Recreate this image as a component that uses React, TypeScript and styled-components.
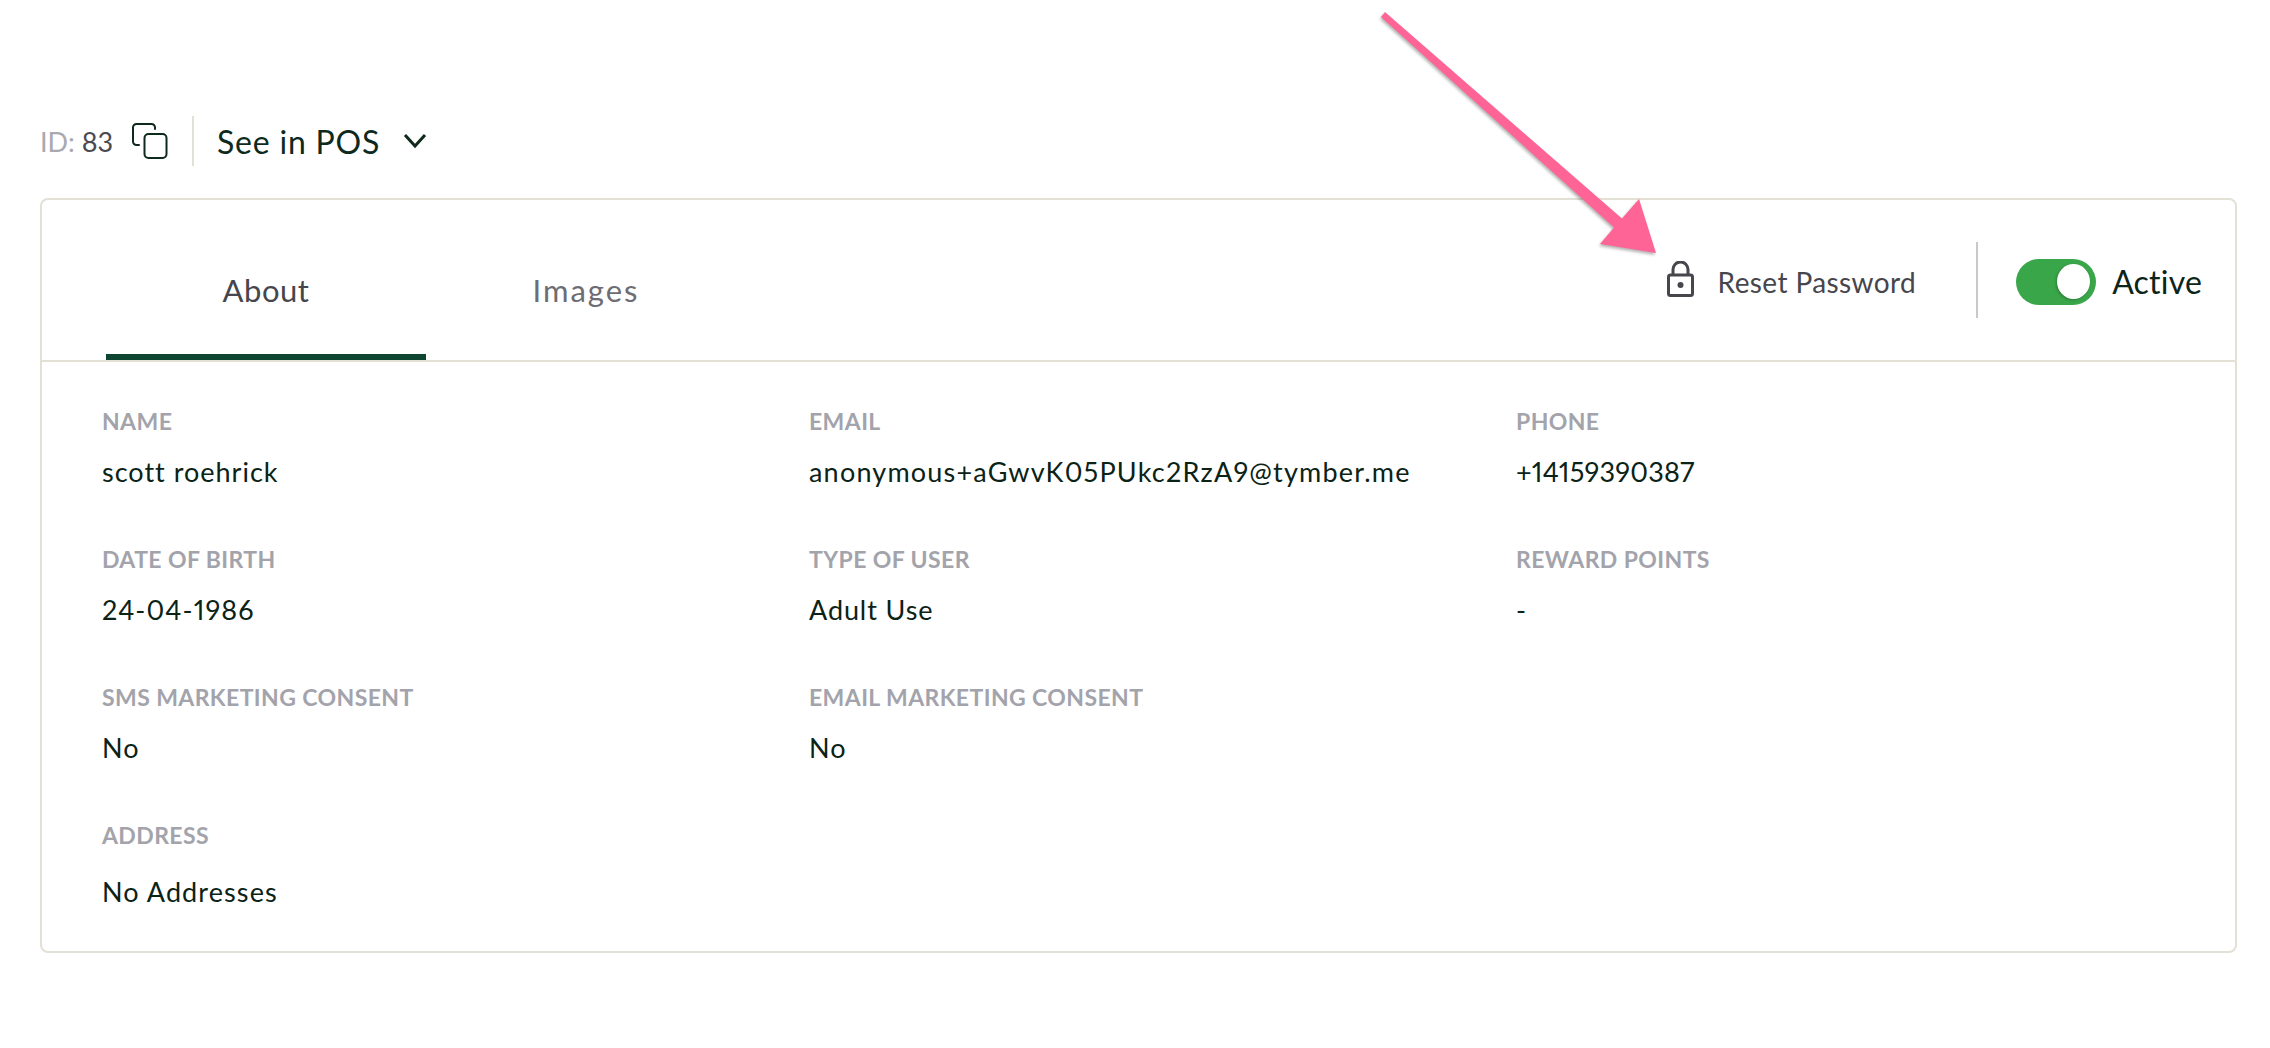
import React from "react";
import styled, { createGlobalStyle } from "styled-components";

const Global = createGlobalStyle`
  html, body { margin: 0; padding: 0; background: #fff; }
  body { font-family: "Lato", "Noto Sans", sans-serif; color: #0d2418; font-variant-numeric: proportional-nums; }
`;

const Page = styled.div`
  position: relative;
  width: 2270px;
  height: 1048px;
  box-sizing: border-box;
  padding: 116px 33px 0 40px;
  overflow: hidden;
`;

const TopBar = styled.div`
  display: flex;
  align-items: center;
  height: 50px;
  margin-bottom: 32px;
`;

const IdText = styled.span`
  font-size: 27px;
  color: #4a4a50;
  width: 92px;
  white-space: nowrap;
  span { color: #a9a9b0; }
`;

const IconSlot = styled.span<{ $w: number; $lift?: number }>`
  display: flex;
  width: ${(p) => p.$w}px;
  margin-bottom: ${(p) => p.$lift ?? 0}px;
  flex: none;
`;

const VRule = styled.span<{ $h: number; $c: string; $lift?: number }>`
  flex: none;
  width: 2px;
  background: ${(p) => p.$c};
  height: ${(p) => p.$h}px;
  margin-bottom: ${(p) => p.$lift ?? 0}px;
`;

const PosButton = styled.span`
  font-size: 32px;
  letter-spacing: 0.8px;
  color: #0d2a1c;
  margin: 0 23px 0 23px;
  white-space: nowrap;
`;

const Card = styled.section`
  box-sizing: border-box;
  height: 755px;
  border: 2px solid #e3e0d6;
  border-radius: 8px;
`;

const CardHead = styled.header`
  display: flex;
  justify-content: space-between;
  height: 162px;
  box-sizing: border-box;
  border-bottom: 2px solid #e3e0d6;
  padding: 0 33px 0 64px;
`;

const Tabs = styled.nav`
  display: flex;
  height: 160px;
`;

const Tab = styled.div<{ $active?: boolean }>`
  box-sizing: border-box;
  width: 320px;
  height: 160px;
  padding-top: 70px;
  text-align: center;
  font-size: 31px;
  line-height: 40px;
  letter-spacing: ${(p) => (p.$active ? 0.5 : 2)}px;
  color: ${(p) => (p.$active ? "#46464c" : "#6d6d73")};
  border-bottom: 6px solid ${(p) => (p.$active ? "#0e4631" : "transparent")};
`;

const Actions = styled.div`
  display: flex;
  align-items: center;
  height: 160px;
  box-sizing: border-box;
  padding-top: 3px;
`;

const ResetLabel = styled.span`
  font-size: 28px;
  letter-spacing: 0.4px;
  color: #46464c;
  margin: 0 60px 0 24px;
  white-space: nowrap;
`;

const Toggle = styled.span`
  position: relative;
  flex: none;
  width: 80px;
  height: 46px;
  margin-left: 38px;
  border-radius: 23px;
  background: #3aa64a;
`;

const Thumb = styled.span`
  position: absolute;
  top: 5px;
  right: 6px;
  width: 33px;
  height: 35px;
  border-radius: 50%;
  background: #fff;
  box-shadow: -1px 1px 3px rgba(0, 0, 0, 0.25);
`;

const ActiveLabel = styled.span`
  font-size: 32px;
  margin-left: 16px;
  letter-spacing: 0.2px;
  color: #0d2418;
`;

const Fields = styled.div`
  display: grid;
  grid-template-columns: 707px 707px 1fr;
  row-gap: 57px;
  padding: 44px 0 0 60px;
`;

const Field = styled.div<{ $wide?: boolean }>`
  display: flex;
  flex-direction: column;
  gap: ${(p) => (p.$wide ? 27 : 21)}px;
  grid-column: ${(p) => (p.$wide ? "1 / -1" : "auto")};
`;

const Label = styled.div`
  font-size: 23px;
  line-height: 30px;
  font-weight: 700;
  letter-spacing: 0.4px;
  color: #a3a3ab;
  text-transform: uppercase;
`;

const Value = styled.div<{ $spacing: number }>`
  font-size: 27px;
  line-height: 30px;
  letter-spacing: ${(p) => p.$spacing}px;
  color: #0b2216;
`;

const ArrowSvg = styled.svg`
  position: absolute;
  left: 1370px;
  top: 5px;
  width: 300px;
  height: 260px;
  filter: drop-shadow(-1px 2px 1.5px rgba(0, 0, 0, 0.3));
`;

type Row = { label: string; value: string; spacing?: number; wide?: boolean };

const rows: Row[] = [
  { label: "Name", value: "scott roehrick", spacing: 1 },
  { label: "Email", value: "anonymous+aGwvK05PUkc2RzA9@tymber.me", spacing: 1.2 },
  { label: "Phone", value: "+14159390387", spacing: 0.2 },
  { label: "Date of Birth", value: "24-04-1986" },
  { label: "Type of User", value: "Adult Use", spacing: 0.9 },
  { label: "Reward Points", value: "-" },
  { label: "SMS Marketing Consent", value: "No" },
  { label: "Email Marketing Consent", value: "No" },
  { label: "Address", value: "No Addresses", wide: true },
];

export default function App() {
  return (
    <Page>
      <Global />
      <TopBar>
        <IdText>
          <span>ID:</span> 83
        </IdText>
        <IconSlot $w={60}>
          <svg width="36" height="36" viewBox="0 0 36 36" fill="none" stroke="#0d2a1c" strokeWidth="2" strokeLinecap="round">
            <rect x="12.5" y="11" width="22" height="24" rx="4" />
            <path d="M7 22H4.5A3.5 3.5 0 0 1 1 18.5V4.5A3.5 3.5 0 0 1 4.5 1H19.5A3.5 3.5 0 0 1 23 4.5V6" />
          </svg>
        </IconSlot>
        <VRule $h={50} $c="#e3e0d6" />
        <PosButton>See in POS</PosButton>
        <IconSlot $w={24}>
          <svg width="24" height="16" viewBox="0 0 24 16" fill="none" stroke="#0d2a1c" strokeWidth="3">
            <path d="M2 2L12 13L22 2" />
          </svg>
        </IconSlot>
      </TopBar>
      <Card>
        <CardHead>
          <Tabs>
            <Tab $active>About</Tab>
            <Tab>Images</Tab>
          </Tabs>
          <Actions>
            <IconSlot $w={27} $lift={6}>
              <svg width="27" height="36" viewBox="0 0 27 36" fill="none" stroke="#46464c" strokeWidth="3">
                <rect x="1.5" y="14" width="24" height="20.5" rx="2" />
                <path d="M6 14V8.5a7.5 7.5 0 0 1 15 0V14" />
                <circle cx="13.5" cy="24" r="3" fill="#46464c" stroke="none" />
              </svg>
            </IconSlot>
            <ResetLabel>Reset Password</ResetLabel>
            <VRule $h={76} $c="#c9c9cc" $lift={3} />
            <Toggle>
              <Thumb />
            </Toggle>
            <ActiveLabel>Active</ActiveLabel>
          </Actions>
        </CardHead>
        <Fields>
          {rows.map((r) => (
            <Field key={r.label} $wide={r.wide}>
              <Label>{r.label}</Label>
              <Value $spacing={r.spacing ?? 1.1}>{r.value}</Value>
            </Field>
          ))}
        </Fields>
      </Card>
      <ArrowSvg viewBox="0 0 300 260">
        <path d="M11 12L15 7L252 213.5L269 194L286 248L230 239L244 222.5Z" fill="#ff6496" />
      </ArrowSvg>
    </Page>
  );
}
